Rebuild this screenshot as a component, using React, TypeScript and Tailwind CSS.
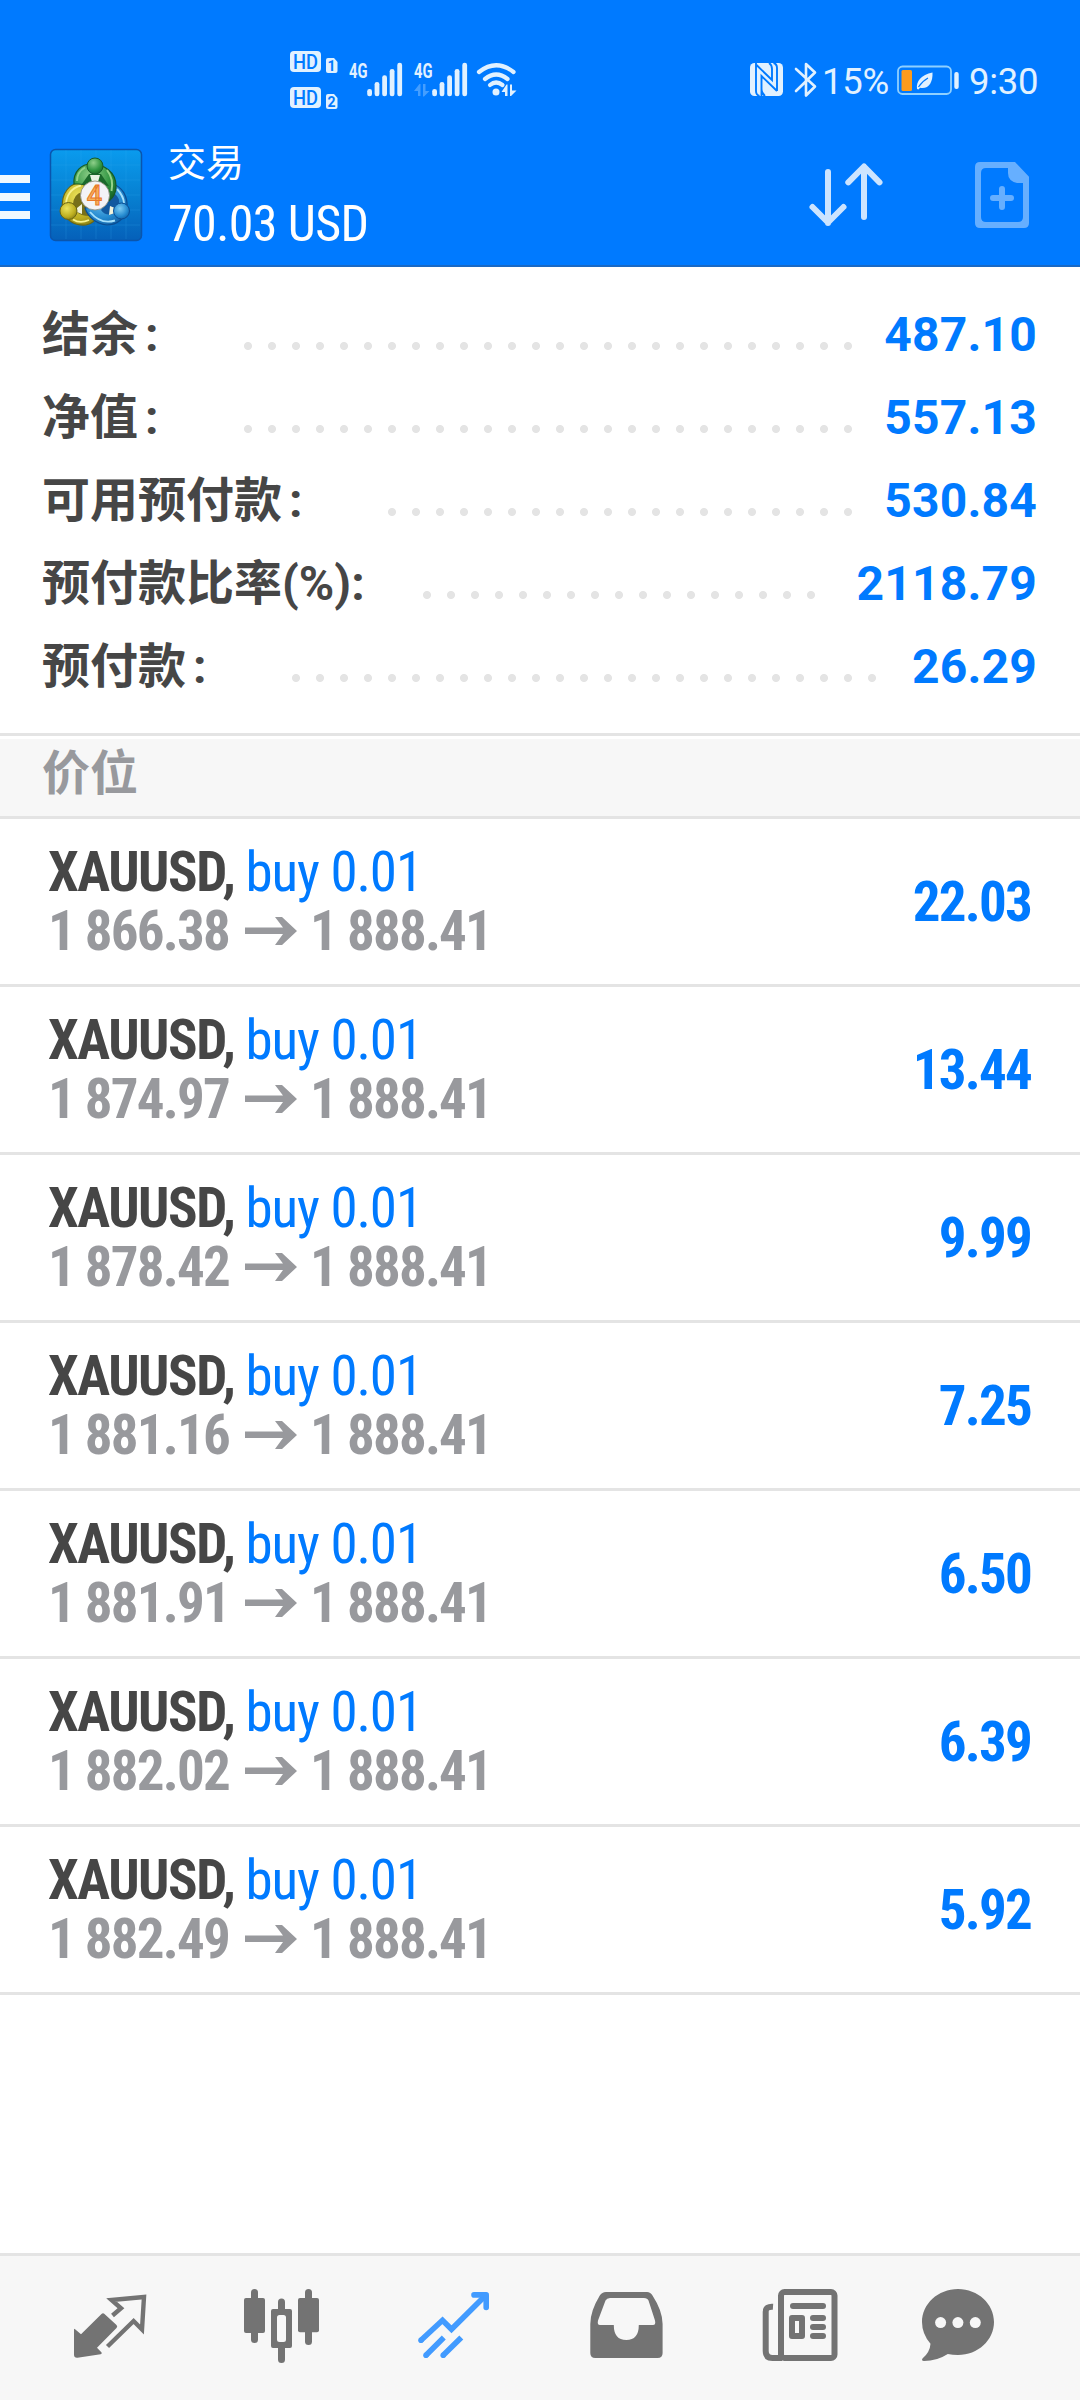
import React from "react";

const account = [
  { label: "结余", colon: "ml-[7px]", value: "487.10", dots: "w-[624px] mr-[24px]" },
  { label: "净值", colon: "ml-[7px]", value: "557.13", dots: "w-[624px] mr-[24px]" },
  { label: "可用预付款", colon: "ml-[7px]", value: "530.84", dots: "w-[480px] mr-[24px]" },
  { label: "预付款比率(%)", colon: "", value: "2118.79", dots: "w-[408px] mr-[33px]" },
  { label: "预付款", colon: "ml-[7px]", value: "26.29", dots: "w-[600px] mr-[28px]" },
];

const positions = [
  { open: "1 866.38", profit: "22.03" },
  { open: "1 874.97", profit: "13.44" },
  { open: "1 878.42", profit: "9.99" },
  { open: "1 881.16", profit: "7.25" },
  { open: "1 881.91", profit: "6.50" },
  { open: "1 882.02", profit: "6.39" },
  { open: "1 882.49", profit: "5.92" },
];

const SignalIcons: React.FC = () => (
  <svg width="240" height="70" viewBox="285 45 240 70" fill="#e1f1ff">
    {[0, 36].map((y, i) => (
      <g key={y}>
        <rect x="290" y={51 + y} width="31" height="21" rx="4" />
        <text x="305.5" y={68.5 + y} fontSize="19.5" textAnchor="middle" textLength="25" lengthAdjust="spacingAndGlyphs" fill="#007aff" className="font-['Roboto'] font-medium">
          HD
        </text>
        <path d={`M326 ${60 + y}q0 -2 2 -2h6l3.500 4v9q0 2 -2 2h-7.500q-2 0 -2 -2z`} />
        <text x="331.500" y={71 + y} fontSize="14" textAnchor="middle" fill="#007aff" className="font-['Roboto'] font-bold">
          {i + 1}
        </text>
      </g>
    ))}
    {[0, 65].map((x) => (
      <g key={x}>
        <text x={349 + x} y="77.500" fontSize="20" textLength="18.500" lengthAdjust="spacingAndGlyphs" className="font-['Roboto'] font-bold">
          4G
        </text>
        <rect x={367.2 + x} y="89" width="4.800" height="7.300" rx="2.300" />
        <rect x={374.6 + x} y="82" width="4.800" height="14.300" rx="2.300" />
        <rect x={382.2 + x} y="75.300" width="4.800" height="21" rx="2.300" />
        <rect x={389.7 + x} y="69" width="4.800" height="27.300" rx="2.300" />
        <rect x={397.3 + x} y="62.800" width="4.800" height="33.500" rx="2.300" />
      </g>
    ))}
    <path d="M414 91l5.500-7h1v12h-2.500v-5zM423 84h2.500v7h4l-5.500 5.500h-1z" opacity=".3" />
    <g fill="none" stroke="#e1f1ff" strokeWidth="4.200" strokeLinecap="round">
      <path d="M479 72q17.200-13.500 34.500 0" />
      <path d="M485 79q11.200-9 22.500 0" />
      <path d="M490 85q6-5 12.500 0" />
    </g>
    <circle cx="496" cy="92" r="3.500" />
    <path d="M501.500 92l5-7.500h1V96h-2.500v-4zM510 84.500h2v6h4.500l-5.500 5.500h-1z" />
  </svg>
);

const NfcBluetooth: React.FC = () => (
  <svg width="67" height="36" viewBox="750 62 67 36">
    <rect x="750" y="63" width="33" height="33" rx="4.500" fill="#e1f1ff" />
    <path d="M756 63V91q0 4 3.500 5M756.500 65L772 80V69q0-4-3-6M761.500 96V76L777 91M761.500 89q0 4 3.500 7M773.500 63q3.500 1 3.500 5V91" fill="none" stroke="#007aff" strokeWidth="1.900" />
    <path d="M796 69l19 17.500-9 9V64l9 8.500L796 91" fill="none" stroke="#e1f1ff" strokeWidth="2.600" strokeLinejoin="round" strokeLinecap="round" />
  </svg>
);

const Battery: React.FC = () => (
  <svg width="64" height="30" viewBox="896 65 64 30">
    <rect x="898" y="66.500" width="53" height="27.500" rx="4.500" fill="none" stroke="#8fd0ff" strokeWidth="1.800" />
    <rect x="901.500" y="70" width="10.500" height="21" rx="1.500" fill="#fd9b1c" />
    <path d="M917 89c-1-8 4-14 15.500-16.500.5 10-4 17-12.500 15.300l-1.500 1.700z" fill="#e1f1ff" />
    <path d="M918.500 87q4-6 9.500-9" fill="none" stroke="#007aff" strokeWidth="1.200" />
    <rect x="954.300" y="72" width="4.400" height="17" rx="2" fill="#e1f1ff" />
  </svg>
);

const AppLogo: React.FC = () => (
  <svg width="94" height="94" viewBox="0 0 94 94">
    <defs>
      <linearGradient id="tile" x1="0" y1="0" x2="0" y2="1">
        <stop offset="0" stopColor="#0a9bee" />
        <stop offset=".5" stopColor="#0781d2" />
        <stop offset="1" stopColor="#0560b9" />
      </linearGradient>
      <radialGradient id="green" cx=".4" cy=".3" r=".8">
        <stop offset="0" stopColor="#8fd08a" />
        <stop offset=".6" stopColor="#2f9440" />
        <stop offset="1" stopColor="#156125" />
      </radialGradient>
      <radialGradient id="yellow" cx=".4" cy=".35" r=".8">
        <stop offset="0" stopColor="#ece45c" />
        <stop offset=".6" stopColor="#bdae20" />
        <stop offset="1" stopColor="#6f6a12" />
      </radialGradient>
      <radialGradient id="blue" cx=".4" cy=".35" r=".8">
        <stop offset="0" stopColor="#7ccbf3" />
        <stop offset=".6" stopColor="#2389cf" />
        <stop offset="1" stopColor="#0b4d93" />
      </radialGradient>
    </defs>
    <rect x="1.500" y="1.500" width="91" height="91" rx="5" fill="url(#tile)" stroke="#0a55ad" strokeWidth="1.500" />
    <path d="M17 2v89M32 2v89M47 2v89M62 2v89M77 2v89M2 17h89M2 32h89M2 47h89M2 62h89M2 77h89" stroke="#39b0f5" strokeWidth=".6" opacity=".35" />
    {/* yellow body */}
    <path d="M35 34C20 34 12 46 13.500 60C16 73 26 78 37 77C43 76 47 72 48 68L53 60L36 52z" fill="url(#yellow)" stroke="#6b6614" strokeWidth="1.200" />
    <path d="M24 56Q25 46 33 44L40 62Q44 66 40 68Q32 68 28 64z" fill="#77701a" />
    <path d="M32 37.500C22 40 17 48 17 57M24 71.500Q31 76 40 72" fill="none" stroke="#f7f28f" strokeWidth="1.900" />
    {/* blue body */}
    <path d="M64 36C73 39 79 48 78 60C77 70 68 77 58 77C47 76 39 69 36 60L54 58z" fill="url(#blue)" stroke="#0b4d93" strokeWidth="1.200" />
    <path d="M60 52L66 46Q71 50 70 56L64 66Q56 68 52 62z" fill="#12599f" />
    <path d="M41 64Q52 77 66 72.500M68 41Q74.500 48 75 55" fill="none" stroke="#a5e0fb" strokeWidth="1.900" />
    {/* green body */}
    <path d="M25 36C24 23 33 16 42 16C55 16 67 24 67 38C67 46 64 50 60 53L46 38L30 36z" fill="url(#green)" stroke="#175b28" strokeWidth="1.200" />
    <path d="M28 33Q28 24 36 19.500M58 22Q65 31 62.500 43" fill="none" stroke="#94d28a" strokeWidth="2" />
    <path d="M33 36L40 26h12L60 38z" fill="#1b6a2c" />
    <path d="M41 27h10l-2 7h-6z" fill="#e8f3e4" />
    <circle cx="46" cy="18" r="8" fill="url(#green)" stroke="#175b28" strokeWidth="1" />
    <path d="M28 60l5-4v10l-5-2zM61 58l5 2v5l-6 2z" fill="#f1f3dc" />
    <circle cx="19.500" cy="63" r="8.500" fill="url(#yellow)" stroke="#6b6614" strokeWidth="1" />
    <circle cx="72.500" cy="63" r="8" fill="url(#blue)" stroke="#0b4d93" strokeWidth="1" />
    <circle cx="46" cy="47.500" r="14.500" fill="#f3f3f6" stroke="#8a8a7a" strokeWidth=".8" />
    <text x="45.500" y="57" fontSize="27" textAnchor="middle" fill="#f7b15a" stroke="#e8782a" strokeWidth="1" className="font-['Roboto'] font-medium">
      4
    </text>
  </svg>
);

const NavBar: React.FC = () => (
  <nav className="h-[147px] border-t-[3px] border-[#e4e4e4] bg-[#f7f7f7] flex items-start pt-[30px] pl-[70px]">
    <svg width="80" height="90" viewBox="70 46 80 90" fill="#737373">
      <path d="M74.500 88.700L81 94.300 101.500 74q1.500-1.500 3 0L116.500 85q1.500 1.500 0 3L97 107.700l4.600 4.800q.5 1.500-1 1.700L77.500 117.700q-3.500.3-3.500-3V89.500z" />
      <path d="M112.500 75.500L121 68.300 111.500 60 144 57 142 89.500 133.600 81 107.500 106.500" fill="none" stroke="#737373" strokeWidth="4.400" />
    </svg>
    <svg width="80" height="90" viewBox="242 46 80 90" fill="#737373" className="ml-[92px]">
      <rect x="244" y="58" width="21" height="35" rx="2" />
      <rect x="251" y="49" width="7" height="54" rx="3.500" />
      <path fillRule="evenodd" d="M273 69h17q2 0 2 2v35q0 2-2 2h-17q-2 0-2-2V71q0-2 2-2zM279.500 75q-2.500 0-2.500 2.500v22q0 2.500 2.500 2.500h4q2.500 0 2.500-2.500v-22q0-2.500-2.500-2.500z" />
      <path d="M278 70v-8a3.500 3.500 0 0 1 7 0v8zM278 107v12.500a3.500 3.500 0 0 0 7 0V107z" />
      <rect x="298" y="58" width="21" height="34.300" rx="2" />
      <rect x="305" y="49" width="7" height="56" rx="3.500" />
    </svg>
    <svg width="80" height="90" viewBox="414 46 80 90" fill="none" stroke="#429bff" strokeWidth="5.600" className="ml-[92px]">
      <path d="M421 100.300L442.500 80.300 451.500 89.300 485 56" />
      <path d="M474 54.900H486.200V67.500" strokeLinecap="round" strokeLinejoin="round" />
      <path d="M426 115.300L443.800 97.500M443.200 115.300L461.300 97.500" />
      <g fill="#429bff" stroke="none">
        <circle cx="421" cy="100.300" r="2.800" />
        <circle cx="426" cy="115.300" r="2.800" />
        <circle cx="443.200" cy="115.300" r="2.800" />
      </g>
    </svg>
    <svg width="80" height="90" viewBox="586 46 80 90" fill="#737373" className="ml-[92px]">
      <path fillRule="evenodd" d="M606 52H647q3.500 0 5.500 3.500Q662.600 71 662.600 84V113q0 5-5 5H595.300q-5 0-5-5V84q0-13 9.500-28.500Q602 52 606 52zM610 58q-3.200 0-4.500 2.500L598 80.500q-1 4.500 2 4.500h13.800q0 15 12.500 15t12.500-15H653q3 0 2-4.500L648.500 60.500Q647.500 58 644 58z" />
    </svg>
    <svg width="80" height="90" viewBox="760 46 80 90" fill="#737373" className="ml-[94px]">
      <rect x="781" y="52" width="53.500" height="66" rx="3.500" fill="none" stroke="#737373" strokeWidth="6" />
      <path d="M773 66.800q-7.300-.5-7.300 5V111q0 7 6.800 7H782" fill="none" stroke="#737373" strokeWidth="6" />
      <rect x="790" y="63" width="36" height="6" rx="3" />
      <rect x="792" y="78" width="10" height="18" fill="none" stroke="#737373" strokeWidth="6" strokeLinejoin="round" />
      <rect x="810" y="75" width="16" height="6" rx="3" />
      <rect x="810" y="84" width="16" height="6" rx="3" />
      <rect x="810" y="93" width="16" height="6" rx="3" />
    </svg>
    <svg width="80" height="90" viewBox="918 46 80 90" fill="#737373" className="ml-[78px]">
      <path d="M958 49C978 49 994 64 994 82C994 100 978 115 958 115Q952.500 115 947.800 114Q937 121 924 121Q921 120.500 922.500 118.500Q930 112 930.500 103.700Q922 94 922 82C922 64 938 49 958 49z" />
      <g fill="#f7f7f7">
        <circle cx="940.600" cy="82.600" r="5.500" />
        <circle cx="957.900" cy="82.600" r="5.500" />
        <circle cx="975.300" cy="82.600" r="5.500" />
      </g>
    </svg>
  </nav>
);

export default function App() {
  return (
    <div className="w-[1080px] h-[2400px] flex flex-col bg-white overflow-hidden font-['Roboto','Noto_Sans_CJK_SC',sans-serif]">
      <header className="h-[267px] shrink-0 bg-[#007aff] border-b-2 border-[#1a69c4] flex flex-col">
        <div className="h-[130px] pt-[45px] pl-[285px] flex items-start text-[#e1f1ff] text-[36.5px] leading-[36px]">
          <SignalIcons />
          <div className="flex pt-[17px] ml-[225px]">
            <NfcBluetooth />
            <span className="ml-[5px] mt-[2px] w-[74px] tracking-[-0.3px]">15%</span>
            <span className="mt-[3px]">
              <Battery />
            </span>
            <span className="ml-[9px] mt-[2px] tracking-[-0.3px]">9:30</span>
          </div>
        </div>
        <div className="flex h-[135px]">
          <div className="w-[30px] pt-[45px] flex flex-col gap-[10px]">
            <div className="h-[8px] bg-[#f0f8ff]" />
            <div className="h-[8px] bg-[#f0f8ff]" />
            <div className="h-[8px] bg-[#f0f8ff]" />
          </div>
          <div className="ml-[19px] pt-[18px]">
            <AppLogo />
          </div>
          <div className="ml-[25px] pt-[8px] w-[600px] text-white">
            <div className="text-[38px] leading-[50px]">交易</div>
            <div className="text-[50px] leading-[72px] tracking-[-0.6px] [font-stretch:75%] font-['Roboto_Condensed','Roboto']">70.03 USD</div>
          </div>
          <svg width="76" height="70" viewBox="28 20 76 70" fill="none" stroke="#cce4ff" strokeWidth="6" strokeLinecap="round" strokeLinejoin="round" className="mt-[30px] ml-[40px]">
            <path d="M48 32V83M32.500 67L48 82.500 63.500 67M84 77V27M68.300 42.300L84 26.500 99.500 42.300" />
          </svg>
          <svg width="56" height="68" viewBox="194 21 56 68" fill="#66afff" className="mt-[31px] ml-[90px]">
            <path fillRule="evenodd" d="M200 22H235L249 36.700V83q0 5-5 5H200q-5 0-5-5V27q0-5 5-5zM206 28q-5 0-5 5V77q0 5 5 5H238q5 0 5-5V43H237Q228 41 228 33V28z" />
            <path d="M222 49v18M213 58h18" stroke="#66afff" strokeWidth="6" strokeLinecap="round" />
          </svg>
        </div>
      </header>

      <section className="h-[469px] shrink-0 pt-[26px] pl-[42px] pr-[43px] border-b-[3px] border-[#e4e4e4]">
        {account.map((row) => (
          <div key={row.label} className="h-[83px] flex items-center text-[48px] font-bold leading-[83px]">
            <span className="text-[#464646] grow whitespace-nowrap">
              {row.label}
              <span className={row.colon}>:</span>
            </span>
            <span className={`${row.dots} h-[24px] mt-[23px] shrink-0 bg-[radial-gradient(circle,#e4e4e4_3.6px,transparent_4.4px)] bg-[length:24px_24px]`} />
            <span className="text-[#007aff] tracking-[0.2px]">{row.value}</span>
          </div>
        ))}
      </section>

      <div className="mt-[3px] h-[80px] shrink-0 bg-[#f7f7f7] border-b-[3px] border-[#e4e4e4] pl-[42px] text-[48px] leading-[70px] font-bold text-[#98999d]">
        价位
      </div>

      <main className="grow">
        {positions.map((p) => (
          <div key={p.open} className="h-[168px] border-b-[3px] border-[#e4e4e4] flex justify-between items-center pl-[48px] pr-[49px] text-[55px] font-bold [font-stretch:75%] font-['Roboto_Condensed','Roboto']">
            <div className="leading-[59px]">
              <div className="text-[#464646] tracking-[-1.5px]">
                XAUUSD, <span className="font-normal tracking-[-1.1px] text-[#007aff]">buy 0.01</span>
              </div>
              <div className="text-[#98999d] tracking-[-1.8px] flex items-center">
                {p.open}
                <svg width="52" height="28" viewBox="0 0 52 28" className="ml-[16px] mr-[13px]">
                  <path d="M0 10.500H38L30 0H37L52 14 37 28H30L38 17H0z" fill="#98999d" />
                </svg>
                1 888.41
              </div>
            </div>
            <span className="text-[#007aff] tracking-[-1.8px] pt-[2px]">{p.profit}</span>
          </div>
        ))}
      </main>

      <NavBar />
    </div>
  );
}
